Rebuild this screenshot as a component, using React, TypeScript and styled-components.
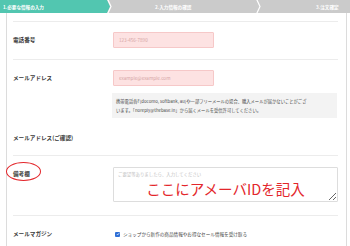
import React from "react";
import styled, { createGlobalStyle } from "styled-components";

const GlobalStyle = createGlobalStyle`
  html, body {
    margin: 0;
    padding: 0;
    background: #ffffff;
  }
  body {
    font-family: "Noto Sans CJK JP", "Noto Sans", sans-serif;
    color: #333333;
  }
`;

const Page = styled.div`
  width: 350px;
  height: 246px;
  overflow: hidden;
  background: #ffffff;
`;

const StepBar = styled.div`
  display: flex;
  height: 13px;
  background: #cbcbcb;
`;

const Step = styled.div<{ $active?: boolean; $width?: number; $pad: number }>`
  display: flex;
  align-items: center;
  box-sizing: border-box;
  ${({ $width }) => ($width ? `width: ${$width}px;` : "flex: 1;")}
  padding-left: ${({ $pad }) => $pad}px;
  background: ${({ $active }) => ($active ? "#52c6b0" : "transparent")};
  color: #ffffff;
  font-size: 4.6px;
  font-weight: 700;
  white-space: nowrap;
`;

const Chevron = ({ fill }: { fill?: string }) => (
  <svg width="6" height="13" viewBox="0 0 6 13" style={{ flex: "none" }}>
    {fill && <polygon points="0,0 3,6.5 0,13" fill={fill} />}
    <polyline points="0.5,-1 4,6.5 0.5,14" fill="none" stroke="#ffffff" strokeWidth="1.2" />
  </svg>
);

const Card = styled.div`
  margin-left: 6px;
  width: 341px;
  box-sizing: border-box;
  border-left: 1px solid #dcdcdc;
  border-right: 1px solid #dcdcdc;
  padding: 8px 8px 0 6px;
`;

const Row = styled.div<{ $border?: boolean; $pt: number; $pb: number }>`
  display: grid;
  grid-template-columns: 100px 1fr;
  align-items: start;
  border-top: ${({ $border }) => ($border ? "1px solid #ececec" : "none")};
  padding: ${({ $pt }) => $pt}px 0 ${({ $pb }) => $pb}px 0;
`;

const Label = styled.div<{ $lh: number }>`
  position: relative;
  font-size: 5.6px;
  font-weight: 700;
  color: #3a3a3a;
  line-height: ${({ $lh }) => $lh}px;
  white-space: nowrap;
`;

const Circle = styled.span`
  position: absolute;
  left: -7px;
  top: -5px;
  width: 35px;
  height: 19px;
  box-sizing: border-box;
  border: 1.4px solid #e3262b;
  border-radius: 50%;
`;

const Field = styled.div`
  display: flex;
  flex-direction: column;
  align-items: flex-start;
`;

const PinkInput = styled.input`
  width: 101px;
  height: 16px;
  box-sizing: border-box;
  margin: 0;
  padding: 0 5px;
  background: #fde2e2;
  border: 1px solid #f6c8c8;
  border-radius: 1px;
  font-family: inherit;
  font-size: 4.6px;
  outline: none;
  &::placeholder {
    color: #d5a5a5;
  }
`;

const Note = styled.div`
  margin-top: 7px;
  margin-left: -1px;
  width: 225px;
  box-sizing: border-box;
  padding: 4px 4px;
  background: #f3f3f3;
  font-size: 4.3px;
  line-height: 8.5px;
  color: #4a4a4a;
  white-space: nowrap;
`;

const Spacer = styled.div`
  height: 16px;
`;

const AreaWrap = styled.div`
  position: relative;
  width: 225px;
`;

const Area = styled.textarea`
  display: block;
  width: 225px;
  height: 35px;
  box-sizing: border-box;
  margin: 0;
  padding: 3px 4px;
  border: 1px solid #dddddd;
  border-radius: 1px;
  background: #ffffff;
  font-family: inherit;
  font-size: 4.4px;
  line-height: 6px;
  outline: none;
  &::placeholder {
    color: #c2c2c2;
  }
`;

const Annotation = styled.div`
  position: absolute;
  left: 0;
  right: 0;
  top: 13px;
  text-align: center;
  font-size: 14.5px;
  line-height: 17px;
  color: #e3262b;
  white-space: nowrap;
  pointer-events: none;
`;

const CheckLine = styled.div`
  display: flex;
  align-items: center;
  gap: 3px;
  height: 14px;
  padding-left: 2px;
  font-size: 4.6px;
  color: #444444;
  white-space: nowrap;
`;

const CheckBox = styled.span`
  display: inline-flex;
  align-items: center;
  justify-content: center;
  width: 5px;
  height: 5px;
  border-radius: 1px;
  background: #2f6fd6;
`;

export default function App() {
  return (
    <Page>
      <GlobalStyle />
      <StepBar>
        <Step $active $width={107} $pad={3}>1.必要な情報の入力</Step>
        <Chevron fill="#52c6b0" />
        <Step $pad={42}>2.入力情報の確認</Step>
        <Chevron />
        <Step $width={88} $pad={54}>3.注文確定</Step>
      </StepBar>
      <Card>
        <Row $border $pt={10} $pb={11}>
          <Label $lh={16}>電話番号</Label>
          <Field>
            <PinkInput placeholder="123-456-7890" />
          </Field>
        </Row>
        <Row $border $pt={10} $pb={4}>
          <Label $lh={16}>メールアドレス</Label>
          <Field>
            <PinkInput placeholder="example@example.com" />
            <Note>
              携帯電話各F(docomo, softbank, au)や一部フリーメールの場合、購入メールが届かないことがござ<br />
              います。「noreply@thebase.in」から届くメールを受信許可してください。
            </Note>
          </Field>
        </Row>
        <Row $pt={8} $pb={9}>
          <Label $lh={16}>メールアドレス(ご確認)</Label>
          <Spacer />
        </Row>
        <Row $border $pt={11} $pb={13}>
          <Label $lh={14}>
            備考欄
            <Circle />
          </Label>
          <AreaWrap>
            <Area placeholder="ご要望等ありましたら、入力してください" />
            <Annotation>ここにアメーバIDを記入</Annotation>
          </AreaWrap>
        </Row>
        <Row $border $pt={11} $pb={10}>
          <Label $lh={14}>メールマガジン</Label>
          <CheckLine>
            <CheckBox>
              <svg width="4" height="4" viewBox="0 0 10 10">
                <polyline points="2,5 4.2,7.3 8.2,2.6" fill="none" stroke="#ffffff" strokeWidth="1.8" />
              </svg>
            </CheckBox>
            ショップから新作の商品情報やお得なセール情報を受け取る
          </CheckLine>
        </Row>
      </Card>
    </Page>
  );
}
